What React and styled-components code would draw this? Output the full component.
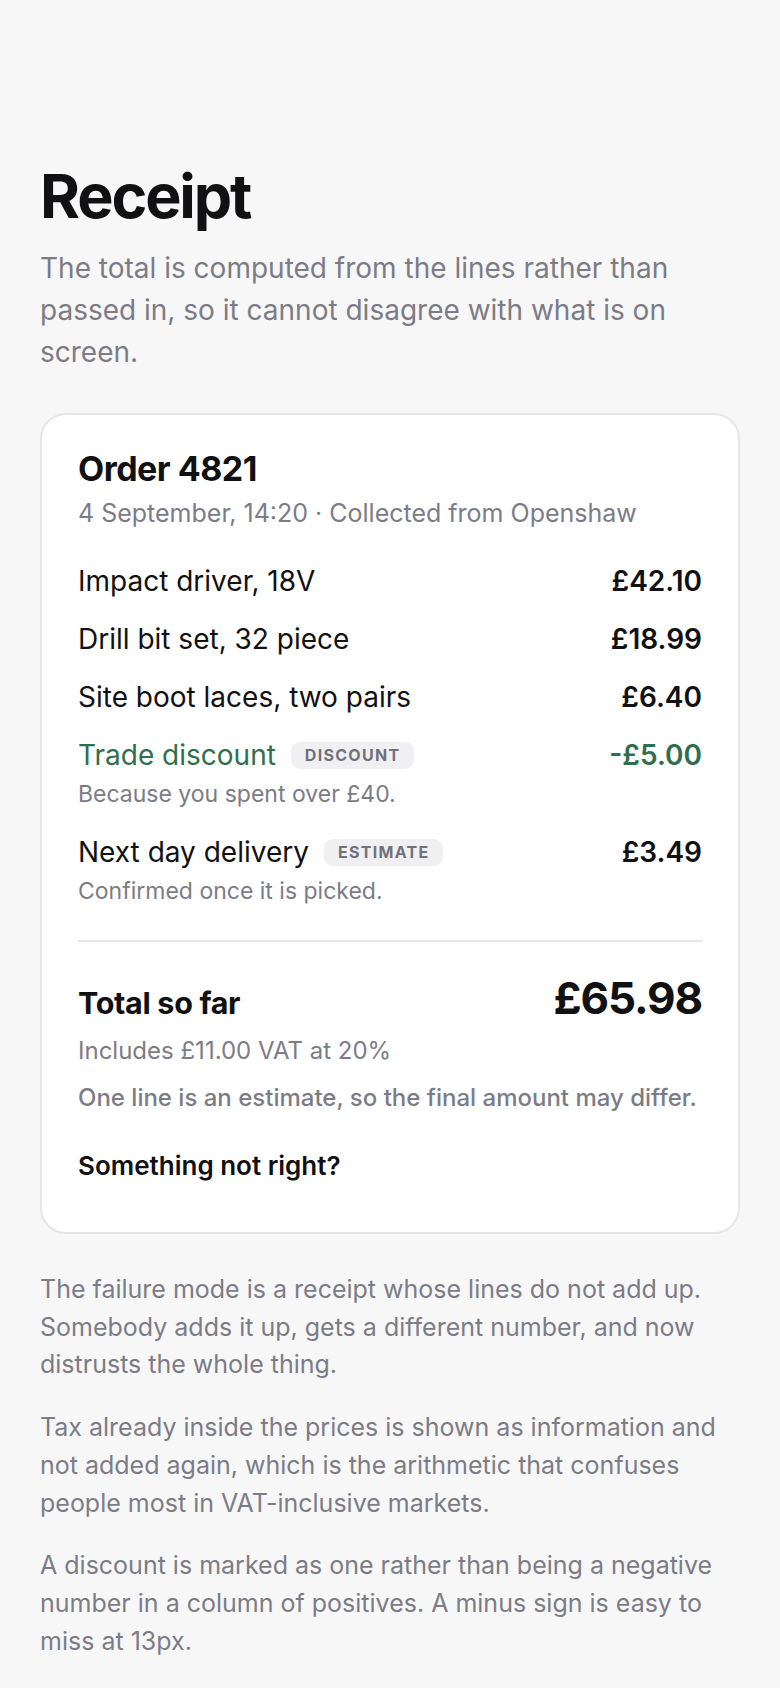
import React from "react";
import styled, { createGlobalStyle } from "styled-components";

const GlobalStyle = createGlobalStyle`
  html, body {
    margin: 0;
    padding: 0;
    background: #f7f7f8;
  }
  body {
    font-family: Inter, "Noto Sans", sans-serif;
    color: #111113;
    -webkit-font-smoothing: antialiased;
  }
  * { box-sizing: border-box; }
`;

const lines = [
  { name: "Impact driver, 18V", pence: 4210 },
  { name: "Drill bit set, 32 piece", pence: 1899 },
  { name: "Site boot laces, two pairs", pence: 640 },
  {
    name: "Trade discount",
    pence: -500,
    tag: "Discount",
    note: "Because you spent over £40.",
    discount: true,
  },
  {
    name: "Next day delivery",
    pence: 349,
    tag: "Estimate",
    note: "Confirmed once it is picked.",
    estimate: true,
  },
];

const money = (p) => (p < 0 ? "-" : "") + "£" + (Math.abs(p) / 100).toFixed(2);

const Page = styled.main`
  padding: 163px 40px 40px;
  min-height: 1688px;
`;

const Title = styled.h1`
  margin: 0;
  font-size: 61px;
  line-height: 66px;
  font-weight: 700;
  letter-spacing: -0.035em;
  color: #111113;
`;

const Lead = styled.p`
  margin: 18px 0 0;
  font-size: 28px;
  line-height: 42px;
  color: #7c7c86;
`;

const Card = styled.section`
  margin-top: 40px;
  background: #ffffff;
  border: 2px solid #e6e6e9;
  border-radius: 26px;
  padding: 36px 36px 36px;
`;

const OrderTitle = styled.h2`
  margin: 0;
  font-size: 34px;
  line-height: 36px;
  font-weight: 700;
  letter-spacing: -0.015em;
`;

const OrderMeta = styled.div`
  margin-top: 8px;
  font-size: 25px;
  line-height: 36px;
  color: #7c7c86;
`;

const List = styled.ul`
  list-style: none;
  margin: 32px 0 0;
  padding: 0;
  display: flex;
  flex-direction: column;
  gap: 22px;
`;

const Line = styled.li`
  display: flex;
  flex-direction: column;
`;

const LineMain = styled.div`
  display: flex;
  align-items: center;
  justify-content: space-between;
  font-size: 28px;
  line-height: 36px;
  color: ${(p) => (p.$discount ? "#2f6f4e" : "#111113")};
`;

const LineName = styled.span`
  display: flex;
  align-items: center;
  gap: 15px;
`;

const Tag = styled.span`
  display: inline-flex;
  align-items: center;
  height: 27px;
  padding: 0 14px;
  border-radius: 9px;
  background: #f0f0f2;
  color: #71717a;
  font-size: 16px;
  font-weight: 700;
  letter-spacing: 0.08em;
  text-transform: uppercase;
`;

const Price = styled.span`
  font-weight: 600;
`;

const Note = styled.div`
  margin-top: 3px;
  font-size: 23px;
  line-height: 36px;
  color: #7c7c86;
`;

const Divider = styled.hr`
  margin: 31px 0 31px;
  border: 0;
  height: 2px;
  background: #e6e6e9;
`;

const TotalRow = styled.div`
  display: flex;
  align-items: baseline;
  justify-content: space-between;
`;

const TotalLabel = styled.span`
  font-size: 30.5px;
  font-weight: 700;
  letter-spacing: -0.01em;
`;

const TotalValue = styled.span`
  font-size: 44px;
  line-height: 51px;
  font-weight: 700;
  letter-spacing: -0.025em;
`;

const Small = styled.p`
  margin: ${(p) => p.$gap || 0}px 0 0;
  font-size: 24px;
  line-height: 33px;
  font-weight: ${(p) => (p.$strong ? 500 : 400)};
  color: #7c7c86;
`;

const HelpButton = styled.button`
  margin-top: 22px;
  padding: 12px 0;
  border: 0;
  background: none;
  font-family: inherit;
  font-size: 26px;
  line-height: 36px;
  font-weight: 600;
  color: #111113;
  cursor: pointer;
  text-align: left;
`;

const Notes = styled.div`
  margin-top: 37px;
  display: flex;
  flex-direction: column;
  gap: 25px;
`;

const NoteText = styled.p`
  margin: 0;
  font-size: 25px;
  line-height: 37.7px;
  color: #7c7c86;
`;

export default function App() {
  const total = lines.reduce((sum, l) => sum + l.pence, 0);
  const vat = Math.round(total / 6);
  const hasEstimate = lines.some((l) => l.estimate);

  return (
    <>
      <GlobalStyle />
      <Page>
        <Title>Receipt</Title>
        <Lead>
          The total is computed from the lines rather than passed in, so it
          cannot disagree with what is on screen.
        </Lead>

        <Card>
          <OrderTitle>Order 4821</OrderTitle>
          <OrderMeta>4 September, 14:20 · Collected from Openshaw</OrderMeta>

          <List>
            {lines.map((l) => (
              <Line key={l.name}>
                <LineMain $discount={l.discount}>
                  <LineName>
                    {l.name}
                    {l.tag && <Tag>{l.tag}</Tag>}
                  </LineName>
                  <Price>{money(l.pence)}</Price>
                </LineMain>
                {l.note && <Note>{l.note}</Note>}
              </Line>
            ))}
          </List>

          <Divider />

          <TotalRow>
            <TotalLabel>Total so far</TotalLabel>
            <TotalValue>{money(total)}</TotalValue>
          </TotalRow>
          <Small $gap={10}>Includes {money(vat)} VAT at 20%</Small>
          {hasEstimate && (
            <Small $gap={14} $strong>
              One line is an estimate, so the final amount may differ.
            </Small>
          )}
          <HelpButton type="button">Something not right?</HelpButton>
        </Card>

        <Notes>
          <NoteText>
            The failure mode is a receipt whose lines do not add up. Somebody
            adds it up, gets a different number, and now distrusts the whole
            thing.
          </NoteText>
          <NoteText>
            Tax already inside the prices is shown as information and not added
            again, which is the arithmetic that confuses people most in
            VAT-inclusive markets.
          </NoteText>
          <NoteText>
            A discount is marked as one rather than being a negative number in a
            column of positives. A minus sign is easy to miss at 13px.
          </NoteText>
        </Notes>
      </Page>
    </>
  );
}
